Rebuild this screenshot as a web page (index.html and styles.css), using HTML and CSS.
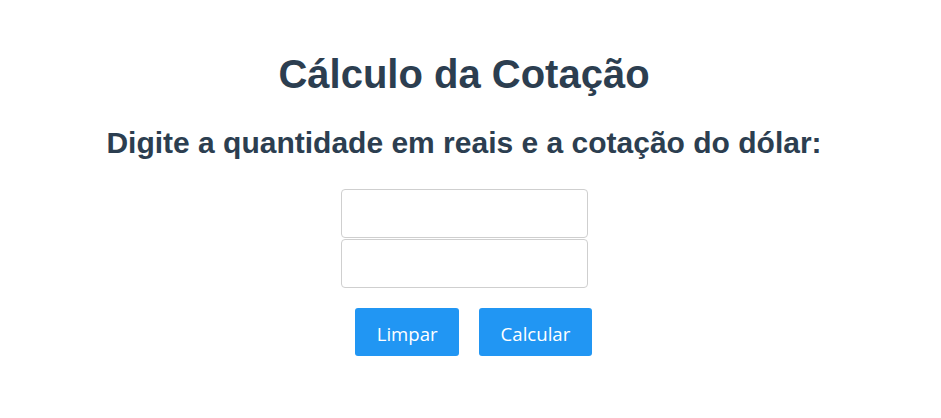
FILE: index.html
```html
<!DOCTYPE html>
<html lang="pt-BR">
<head>
<meta charset="utf-8">
<title>Cálculo da Cotação</title>
<link rel="stylesheet" href="styles.css">
</head>
<body>
<main class="app">
  <h1 class="title">Cálculo da Cotação</h1>
  <h2 class="subtitle">Digite a quantidade em reais e a cotação do dólar:</h2>
  <div class="fields">
    <input class="field" type="text">
    <input class="field" type="text">
  </div>
  <div class="actions">
    <button class="btn" type="button">Limpar</button>
    <button class="btn" type="button">Calcular</button>
  </div>
</main>
</body>
</html>
```

FILE: styles.css
```css
html, body {
  margin: 0;
  background: #ffffff;
}

.app {
  display: flex;
  flex-direction: column;
  align-items: center;
  width: 928px;
  padding-top: 51px;
  font-family: "Liberation Sans", Arial, sans-serif;
  color: #2c3e50;
}

.title {
  margin: 0;
  font-size: 40px;
  font-weight: bold;
  line-height: 46px;
}

.subtitle {
  margin: 28px 0 0;
  font-size: 30px;
  font-weight: bold;
  line-height: 35px;
}

.fields {
  display: flex;
  flex-direction: column;
  gap: 1px;
  margin-top: 29px;
}

.field {
  box-sizing: border-box;
  width: 247px;
  height: 49px;
  margin: 0;
  border: 1px solid #cfcfcf;
  border-radius: 4px;
  background: #fff;
  padding: 0 10px;
  font-size: 16px;
}

.actions {
  display: flex;
  margin-top: 20px;
  padding-right: 1px;
}

.btn {
  margin-left: 20px;
  height: 48px;
  padding: 2px 21.5px 0;
  border: none;
  border-radius: 3px;
  background: #2196f3;
  color: #ffffff;
  font-family: "Open Sans", "Noto Sans", sans-serif;
  font-size: 18.6px;
  cursor: pointer;
}
```
